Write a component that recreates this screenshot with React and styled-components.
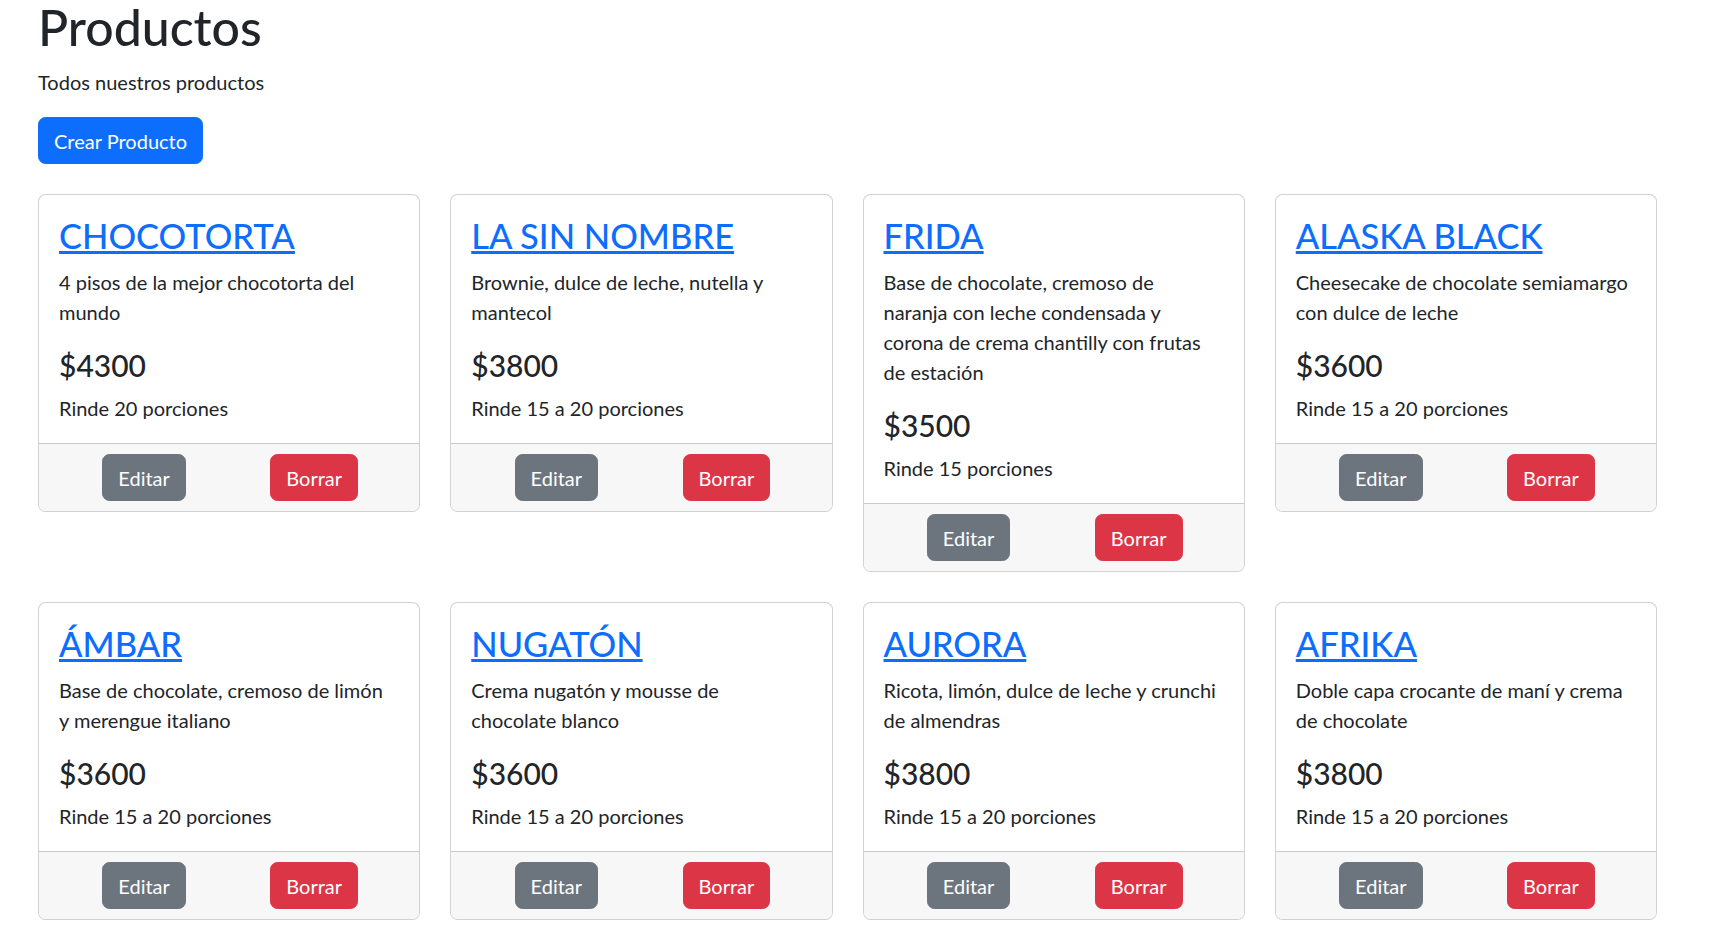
import React from "react";
import styled, { createGlobalStyle } from "styled-components";

const products = [
  { name: "CHOCOTORTA", desc: "4 pisos de la mejor chocotorta del mundo", price: 4300, yields: "Rinde 20 porciones" },
  { name: "LA SIN NOMBRE", desc: "Brownie, dulce de leche, nutella y mantecol", price: 3800, yields: "Rinde 15 a 20 porciones" },
  {
    name: "FRIDA",
    desc: "Base de chocolate, cremoso de naranja con leche condensada y corona de crema chantilly con frutas de estación",
    price: 3500,
    yields: "Rinde 15 porciones",
  },
  { name: "ALASKA BLACK", desc: "Cheesecake de chocolate semiamargo con dulce de leche", price: 3600, yields: "Rinde 15 a 20 porciones" },
  { name: "ÁMBAR", desc: "Base de chocolate, cremoso de limón y merengue italiano", price: 3600, yields: "Rinde 15 a 20 porciones" },
  { name: "NUGATÓN", desc: "Crema nugatón y mousse de chocolate blanco", price: 3600, yields: "Rinde 15 a 20 porciones" },
  { name: "AURORA", desc: "Ricota, limón, dulce de leche y crunchi de almendras", price: 3800, yields: "Rinde 15 a 20 porciones" },
  { name: "AFRIKA", desc: "Doble capa crocante de maní y crema de chocolate", price: 3800, yields: "Rinde 15 a 20 porciones" },
];

const GlobalStyle = createGlobalStyle`
  * { box-sizing: border-box; }
  body {
    margin: 0;
    background: #fff;
    color: #212529;
    font-family: Lato, "Liberation Sans", sans-serif;
    font-size: 20px;
    line-height: 1.5;
  }
`;

const Page = styled.main`
  padding: 0 56px 0 38px;
`;

const Title = styled.h1`
  margin: -3px 0 10px;
  font-size: 50px;
  line-height: 60px;
  font-weight: 500;
`;

const Lead = styled.p`
  margin: 0 0 20px;
`;

const colors = {
  primary: "#0d6efd",
  secondary: "#6c757d",
  danger: "#dc3545",
};

const Button = styled.button`
  display: inline-block;
  padding: 7.5px 15px;
  border: 1px solid ${(p) => colors[p.$variant]};
  border-radius: 7.5px;
  background: ${(p) => colors[p.$variant]};
  color: #fff;
  font-family: inherit;
  font-size: 20px;
  line-height: 30px;
  cursor: pointer;
`;

const Grid = styled.section`
  display: grid;
  grid-template-columns: repeat(4, 1fr);
  gap: 30px;
  align-items: start;
  margin-top: 30px;
`;

const Card = styled.article`
  border: 1px solid rgba(0, 0, 0, 0.175);
  border-radius: 7.5px;
  background: #fff;
  overflow: hidden;
`;

const CardBody = styled.div`
  padding: 20px;
`;

const CardTitle = styled.h3`
  margin: 0 0 10px;
  font-size: 34.5px;
  line-height: 42px;
  font-weight: 500;

  a {
    color: #0d6efd;
    text-decoration: underline;
  }
`;

/* a touch narrower than the body so lines break where the original's do */
const CardText = styled.p`
  margin: 0 0 20px;
  padding-right: 4px;
`;

const Price = styled.h4`
  margin: 0 0 10px;
  font-size: 30px;
  line-height: 36px;
  font-weight: 500;
`;

const Yield = styled.p`
  margin: 0;
`;

const CardFooter = styled.div`
  display: grid;
  grid-template-columns: 1fr 1fr;
  justify-items: center;
  padding: 10px 20px;
  border-top: 1px solid rgba(0, 0, 0, 0.175);
  background: #f7f7f7;
`;

const ProductCard = ({ product }) => (
  <Card>
    <CardBody>
      <CardTitle>
        <a href="#">{product.name}</a>
      </CardTitle>
      <CardText>{product.desc}</CardText>
      <Price>${product.price}</Price>
      <Yield>{product.yields}</Yield>
    </CardBody>
    <CardFooter>
      <Button $variant="secondary">Editar</Button>
      <Button $variant="danger">Borrar</Button>
    </CardFooter>
  </Card>
);

export default function App() {
  return (
    <>
      <GlobalStyle />
      <Page>
        <Title>Productos</Title>
        <Lead>Todos nuestros productos</Lead>
        <Button $variant="primary">Crear Producto</Button>
        <Grid>
          {products.map((p) => (
            <ProductCard key={p.name} product={p} />
          ))}
        </Grid>
      </Page>
    </>
  );
}
